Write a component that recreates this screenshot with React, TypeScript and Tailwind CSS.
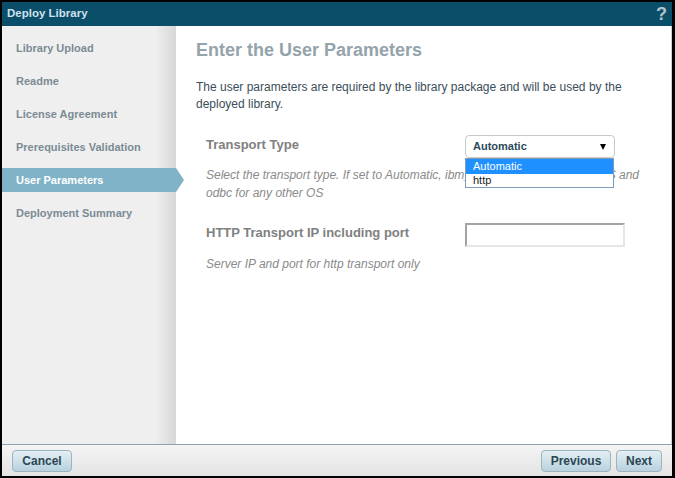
const steps = [
  'Library Upload',
  'Readme',
  'License Agreement',
  'Prerequisites Validation',
  'User Parameters',
  'Deployment Summary',
];

function Sidebar() {
  return (
    <nav className="relative z-10 flex w-[174px] flex-col gap-[9px] bg-[linear-gradient(to_right,#efefef_88%,#d7d7d7)] pt-[10px]">
      {steps.map((s) =>
        s === 'User Parameters' ? (
          <div key={s} className="relative flex h-[24px] items-center bg-[#80b3c8] pl-[14px] text-[11px] font-bold text-white">
            {s}
            <span className="absolute right-[-8px] top-0 h-0 w-0 border-y-[12px] border-l-[8px] border-y-transparent border-l-[#80b3c8]" />
          </div>
        ) : (
          <div key={s} className="flex h-[24px] items-center pl-[14px] text-[11px] font-bold text-[#7b8b94]">
            {s}
          </div>
        ),
      )}
    </nav>
  );
}

function TransportSelect() {
  return (
    <div className="relative">
      <div className="flex h-[23px] w-[150px] items-center justify-between rounded-[4px] border border-[#c9c9c9] bg-white pl-[7px] pr-[8px]">
        <span className="text-[11px] font-bold text-[#2b4a5a]">Automatic</span>
        <span className="h-0 w-0 border-x-[3.5px] border-t-[6px] border-x-transparent border-t-black" />
      </div>
      <ul className="absolute left-0 top-full z-20 w-[149px] border border-[#7f9db9] bg-white text-[11px]">
        <li className="h-[15px] bg-[#1e90ff] pl-[7px] leading-[15px] text-white">Automatic</li>
        <li className="h-[13px] pl-[7px] leading-[13px] text-[#222]">http</li>
      </ul>
    </div>
  );
}

export default function App() {
  return (
    <div className="flex h-[478px] w-[675px] flex-col bg-black pb-[2px] pl-[2px] pr-[3px] pt-[2px] font-['Liberation_Sans',Arial,sans-serif]">
      <header className="flex h-[24px] items-center justify-between bg-[#0b4e6a] pl-[5px] pr-[5px]">
        <span className="text-[11.5px] font-bold text-[#cfe1ea]">Deploy Library</span>
        <span className="text-[18px] font-bold leading-none text-[#b3c3cb]">?</span>
      </header>

      <div className="flex min-h-0 flex-1">
        <Sidebar />
        <main className="flex-1 border-r border-[#cfcfcf] bg-white pl-[20px] pt-[13px]">
          <h1 className="text-[18px] font-bold leading-[22px] text-[#95a3ab]">Enter the User Parameters</h1>
          <p className="mt-[18px] pr-[10px] text-[12px] leading-[17px] text-[#3c4e59]">
            The user parameters are required by the library package and will be used by the deployed library.
          </p>

          <div className="pl-[10px]">
            <div className="mt-[22px] flex items-start">
              <label className="w-[259px] text-[13px] font-bold leading-[20px] text-[#808080]">Transport Type</label>
              <TransportSelect />
            </div>
            <p className="mt-[8px] w-[440px] text-[12px] italic leading-[18px] text-[#8a8a8a]">
              Select the transport type. If set to Automatic, ibm_db is used for Windows OS and odbc for any other OS
            </p>

            <div className="mt-[21px] flex items-start">
              <label className="w-[259px] text-[13px] font-bold leading-[20px] text-[#808080]">
                HTTP Transport IP including port
              </label>
              <input className="h-[24px] w-[160px] border-2 border-b-[#e6e6e6] border-l-[#a3a3a3] border-r-[#e6e6e6] border-t-[#a3a3a3] bg-white outline-none" />
            </div>
            <p className="mt-[8px] text-[12px] italic leading-[18px] text-[#8a8a8a]">
              Server IP and port for http transport only
            </p>
          </div>
        </main>
      </div>

      <footer className="flex h-[32px] items-center justify-between border-t border-[#8fa3ab] bg-gradient-to-b from-[#f4f4f4] to-[#e4e4e4] pl-[10px] pr-[10px]">
        <button className="h-[22px] w-[60px] rounded-[4px] border border-[#9db3be] bg-gradient-to-b from-[#e4eff4] to-[#b7d2de] text-[12px] font-bold text-[#2c4654]">
          Cancel
        </button>
        <div className="flex gap-[5px]">
          <button className="h-[22px] w-[70px] rounded-[4px] border border-[#9db3be] bg-gradient-to-b from-[#e4eff4] to-[#b7d2de] text-[12px] font-bold text-[#2c4654]">
            Previous
          </button>
          <button className="h-[22px] w-[46px] rounded-[4px] border border-[#9db3be] bg-gradient-to-b from-[#e4eff4] to-[#b7d2de] text-[12px] font-bold text-[#2c4654]">
            Next
          </button>
        </div>
      </footer>
    </div>
  );
}
